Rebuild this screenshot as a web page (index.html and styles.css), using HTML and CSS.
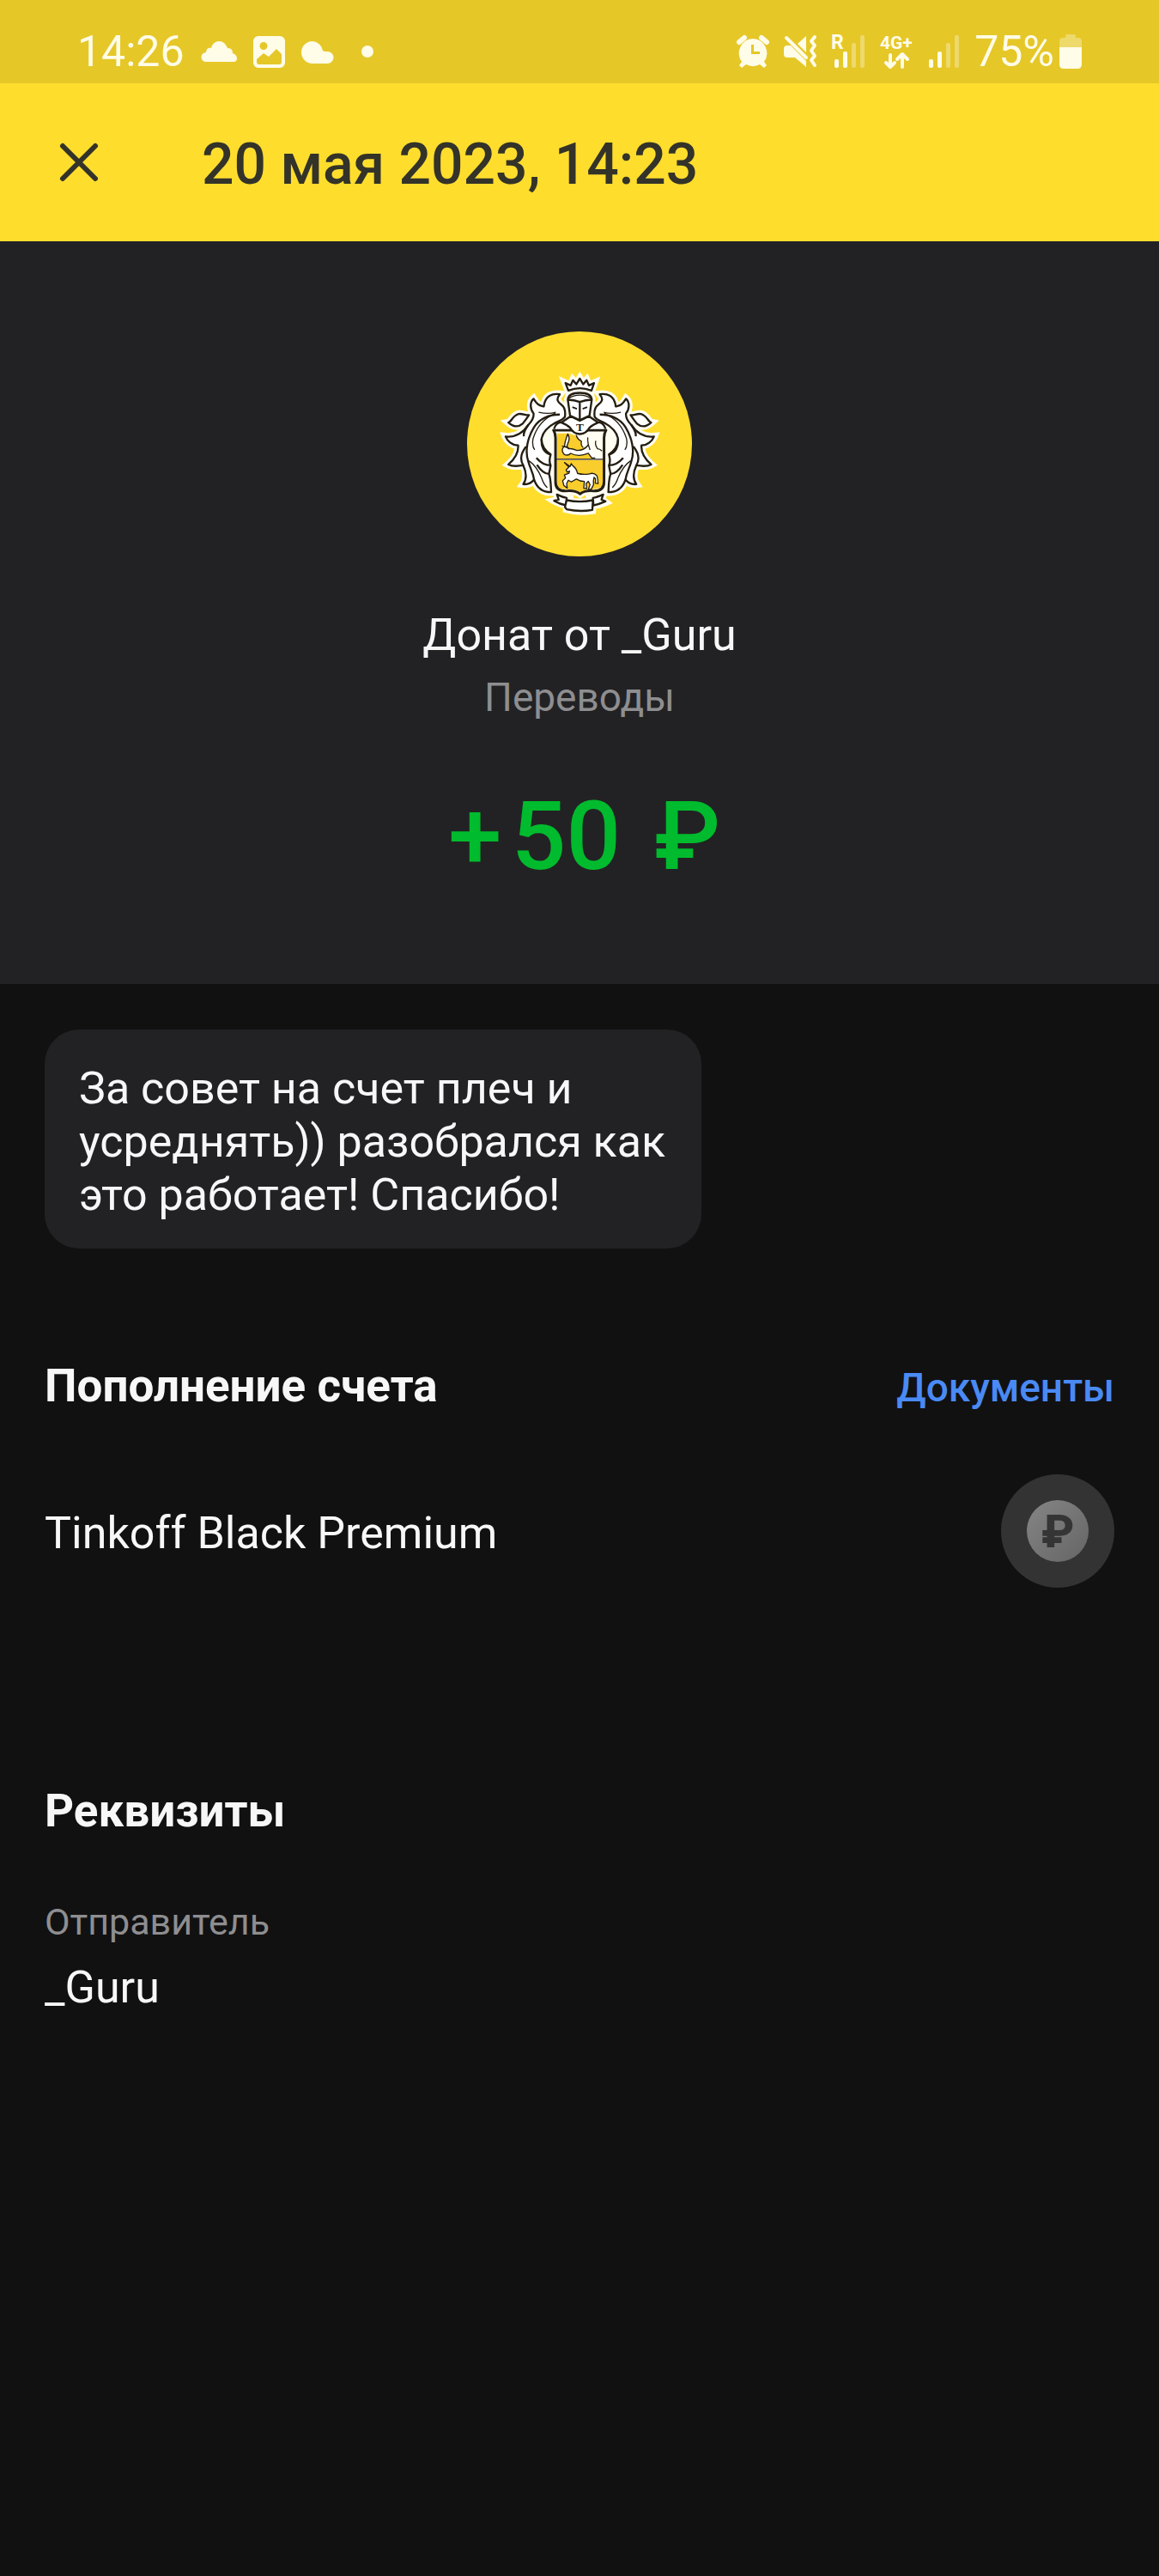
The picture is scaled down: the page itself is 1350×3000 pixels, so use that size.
FILE: index.html
```html
<!DOCTYPE html>
<html lang="ru">
<head>
    <meta charset="utf-8">
    <meta name="viewport" content="width=device-width, initial-scale=1">
    <title>20 мая 2023, 14:23</title>
    <link rel="stylesheet" href="styles.css">
</head>
<body>
    <div class="status-bar">
        <div class="status-group notifications">
            <span class="status-text">14:26</span>
            <svg class="status-icon" width="42" height="38" viewBox="0 0 42 38">
                <path d="M6 31a5.500 5.500 0 0 1 0-11c0-5 4-6 6-5 1-5 5-8 9-8 5 0 8 3 10 8 5 0 6 3 6 6 3 1 5 3 5 6 0 3-2 4-4 4z"/>
            </svg>
            <svg class="status-icon" width="37" height="38" viewBox="0 0 37 38">
                <path fill-rule="evenodd" d="M6 1h25a6 6 0 0 1 6 6v25a6 6 0 0 1-6 6H6a6 6 0 0 1-6-6V7a6 6 0 0 1 6-6zM12 8a4 4 0 1 0 0 9 4 4 0 0 0 0-9zM4 28v3q0 3 3 3h23q3 0 3-3V22l-6-6-9 9-6-4z"/>
            </svg>
            <svg class="status-icon" width="38" height="38" viewBox="0 0 38 38">
                <path d="M13 7a13 13 0 0 1 12 11c1 1 3 1 5 1a7 7 0 0 1 1 14H13A13 13 0 0 1 13 7z"/>
            </svg>
            <svg class="status-icon" width="52" height="38" viewBox="0 0 52 38">
                <circle cx="20" cy="19" r="7"/>
            </svg>
        </div>
        <div class="status-group">
            <svg class="status-icon" width="38" height="38" viewBox="0 0 38 38">
                <path fill-rule="evenodd" d="M19 4a17 17 0 0 1 13 27l3 4-3 3-5-4a17 17 0 0 1-16 0l-5 4-3-3 3-4A17 17 0 0 1 19 4zM17 11v11h10v-3h-7v-8z"/>
                <path class="stroke" d="M3 8l6-5M35 8l-6-5"/>
            </svg>
            <svg class="status-icon" width="38" height="38" viewBox="0 0 38 38">
                <path d="M16 10L26 1v19zM0 16q0-4 4-4h4l18 18v7L13 26H4q-4 0-4-4z"/>
                <path class="stroke thin" d="M3 3l23 23M36 2l-4 5 4 5-4 6 4 6-4 5 4 6"/>
            </svg>
            <svg class="status-icon" width="40" height="40" viewBox="0 0 40 40">
                <text class="net-label" x="0" y="17" font-size="23">R</text>
                <rect x="4" y="29" width="5" height="10" rx="2"/>
                <rect x="14" y="20" width="5" height="19" rx="2"/>
                <rect class="faint" x="24" y="10" width="5" height="29" rx="2"/>
                <rect class="faint" x="34" y="1" width="5" height="38" rx="2"/>
            </svg>
            <svg class="status-icon" width="40" height="40" viewBox="0 0 40 40">
                <text class="net-label" x="0" y="17" font-size="21">4G+</text>
                <path class="stroke thin" d="M12 24v14M7 33l5 5 5-5M26 38V24M20 29l6-6 6 6"/>
            </svg>
            <svg class="status-icon" width="36" height="40" viewBox="0 0 36 40">
                <rect x="0" y="29" width="5" height="10" rx="2"/>
                <rect x="10" y="20" width="5" height="19" rx="2"/>
                <rect class="faint" x="20" y="10" width="5" height="29" rx="2"/>
                <rect class="faint" x="30" y="1" width="5" height="38" rx="2"/>
            </svg>
            <div class="battery">
                <span class="status-text">75%</span>
                <svg class="status-icon" width="26" height="40" viewBox="0 0 26 40">
                    <path class="faint" d="M0 15V8q0-4 4-4h3V2q0-2 2-2h8q2 0 2 2v2h3q4 0 4 4v7z"/>
                    <path d="M0 15h26v20q0 5-5 5H5q-5 0-5-5z"/>
                </svg>
            </div>
        </div>
    </div>

    <header class="header">
        <button class="close-btn" type="button" aria-label="Закрыть">
            <svg width="46" height="46" viewBox="0 0 46 46">
                <path d="M4 4l38 38M42 4L4 42"/>
            </svg>
        </button>
        <h1 class="header-title">20 мая 2023, 14:23</h1>
    </header>

    <section class="hero">
        <svg class="avatar" viewBox="41 47 788 788">
            <defs>
                <g id="mantle">
                    <path d="M384 346C386 330 386 314 372 304C358 294 352 284 366 267C340 264 314 270 310 310C296 306 288 306 274 283C260 296 262 320 274 334C276 350 266 364 256 374C240 398 216 420 176 415C182 430 198 446 220 446C222 472 206 496 186 513C202 522 226 518 238 516C248 538 252 562 238 582C256 584 268 576 276 566C284 590 300 610 336 610C334 590 336 570 328 546L334 516C326 500 332 488 334 478C316 466 302 450 302 424C306 396 330 378 352 366C366 360 378 356 384 346Z"/>
                    <path d="M186 366C196 364 202 340 222 336C236 334 248 342 258 340C250 352 244 360 236 370C222 382 204 382 186 366Z"/>
                </g>
                <g id="center">
                    <path d="M396 254L386 228L404 236L412 218L424 232L436 212L448 232L460 218L468 236L486 228L477 254Q436 238 396 254Z"/>
                    <path d="M394 286Q396 262 436 260Q476 262 478 286L470 344L436 360L402 344Z"/>
                    <path d="M348 388Q356 362 380 360L404 344L436 360L468 344L492 360Q516 362 524 388V396H348Z"/>
                    <path d="M344 392H528Q520 404 521 422V576Q520 606 486 606Q456 602 437 616Q418 602 386 606Q352 606 351 576V422Q352 404 344 392Z"/>
                    <path d="M356 618Q376 630 400 632L398 640Q436 650 474 640L472 632Q500 630 518 618L512 636L526 646Q504 656 482 656L480 674Q436 682 390 670L390 656Q366 652 346 640L362 636Z"/>
                </g>
            </defs>
            <circle cx="435" cy="441" r="394" fill="#ffdd2d"/>
            <g class="halo">
                <use href="#mantle"/>
                <use href="#mantle" transform="translate(872 0) scale(-1 1)"/>
                <use href="#center"/>
                <path d="M310 390H560V600H310Z"/>
            </g>
            <g class="ink">
                <use href="#mantle"/>
                <use href="#mantle" transform="translate(872 0) scale(-1 1)"/>
                <g id="veins" fill="none">
                    <path d="M366 338C330 338 294 352 276 382C254 418 242 464 256 504C262 526 272 540 276 566"/>
                    <path d="M256 374C246 388 238 398 240 414M238 516C228 500 226 478 248 450M284 490C294 502 312 516 334 516M286 514C298 532 312 546 328 546M302 424C300 450 310 472 334 478"/>
                    <path class="fine" d="M292 330Q326 338 352 330M350 334C314 350 284 382 272 424Q268 448 278 462M258 500Q286 520 302 560Q310 584 322 594"/>
                </g>
                <use href="#veins" transform="translate(872 0) scale(-1 1)"/>
            </g>
            <!-- shield halves -->
            <path class="gold" d="M356 404H400Q410 410 424 410Q426 422 442 432Q438 444 446 452L474 462L482 494H356Z"/>
            <path class="gold" d="M355 498H518V580Q512 600 480 600Q456 598 437 610Q418 598 386 600Q358 600 355 576Z"/>
            <g class="ink thick">
                <path d="M344 393H528Q521 404 521 422V576Q520 606 486 606Q456 602 437 616Q418 602 386 606Q352 606 351 576V422Q351 404 344 393Z" fill="none"/>
                <path d="M352 495H520" fill="none" class="fine"/>
            </g>
            <g class="ink fine">
                <!-- arm with the sword -->
                <path fill="none" d="M424 410Q426 424 442 432Q438 446 448 454"/>
                <path d="M466 444Q452 464 426 464Q408 456 396 458L392 450Q380 448 376 456Q372 468 382 478Q396 484 404 474Q432 488 466 474L478 490H490"/>
                <path d="M382 450Q384 430 394 406Q402 422 396 434L390 452Z"/>
                <path fill="none" d="M464 418Q462 436 472 462M492 430Q488 442 498 458Q506 458 514 466M374 448L398 456"/>
                <!-- unicorn -->
                <path d="M382 506L402 520L406 510L412 518Q424 526 428 544Q446 550 470 546Q484 540 496 552Q500 566 500 580L490 578Q494 562 486 558Q482 572 484 584L476 600H466L472 584L466 572L458 580L460 598L450 596L452 572Q436 572 424 564L406 574L396 568L390 580L392 596L380 586L376 570L386 560L382 550L398 544L400 536L392 540L388 532L398 522Z"/>
            </g>
            <g class="ink">
                <path d="M346 388Q354 362 376 366Q386 368 402 384Q414 406 436 406Q458 406 470 384Q486 368 496 366Q518 362 526 388"/>
                <path d="M372 366L404 344L436 360L468 344L500 366Q480 374 470 384Q458 406 436 406Q414 406 402 384Q392 374 372 366Z"/>
                <path d="M394 286Q396 262 436 262Q476 262 478 286L470 342L436 358L402 342Z"/>
                <path d="M394 286Q416 286 436 294Q456 286 478 286M436 294V356" fill="none"/>
                <path d="M396 282Q414 270 436 270T476 282" fill="none" class="fine"/>
                <path d="M410 312L426 318M462 312L446 318" fill="none" class="eyes"/>
                <path d="M396 254L386 228L404 236L412 218L424 232L436 212L448 232L460 218L468 236L486 228L477 254Q436 238 396 254Z"/>
                <path d="M390 630Q376 628 356 618L362 636L346 640Q366 652 388 656ZM482 630Q496 628 518 618L512 636L526 642Q504 652 484 656Z"/>
                <path d="M390 638Q436 648 482 638L480 672Q436 680 390 670L384 662Z"/>
            </g>
            <text class="chest" x="436" y="396" text-anchor="middle">T</text>
        </svg>
        <h2 class="hero-name">Донат от _Guru</h2>
        <p class="hero-category">Переводы</p>
        <p class="amount">&#8202;+&#8202;50 &#8202;₽</p>
    </section>

    <main class="content">
        <div class="message">За совет на счет плеч и усреднять)) разобрался как это работает! Спасибо!</div>

        <section class="account">
            <div class="section-head">
                <h3 class="section-title">Пополнение счета</h3>
                <a class="docs-link" href="#">Документы</a>
            </div>
            <div class="account-row">
                <span class="value">Tinkoff Black Premium</span>
                <svg class="coin" viewBox="0 0 132 132">
                    <defs>
                        <linearGradient id="coinFill" x1="0" y1="0" x2="1" y2="1">
                            <stop offset="0" stop-color="#858585"/>
                            <stop offset="1" stop-color="#656565"/>
                        </linearGradient>
                    </defs>
                    <circle cx="66" cy="66" r="66" fill="#333333"/>
                    <circle cx="66" cy="66" r="36" fill="url(#coinFill)"/>
                    <text class="coin-sign" x="66" y="85" text-anchor="middle">₽</text>
                </svg>
            </div>
        </section>

        <section class="details">
            <h3 class="section-title">Реквизиты</h3>
            <dl class="detail">
                <dt class="label">Отправитель</dt>
                <dd class="value">_Guru</dd>
            </dl>
        </section>
    </main>
</body>
</html>
```
FILE: styles.css
```css
:root {
    --brand: #ffdd2d;
    --brand-dark: #e5c728;
    --bg: #111112;
    --panel: #222224;
    --text: #f7f7f8;
    --muted: #8e8e90;
    --green: #00bb2d;
    --link: #4a8af4;
}

* {
    box-sizing: border-box;
}

body {
    margin: 0;
    min-height: 100vh;
    background: var(--bg);
    color: var(--text);
    font-family: Roboto, "Liberation Sans", sans-serif;
    font-size: 52px;
    line-height: 62px;
}

h1, h2, h3, p, dl, dd {
    margin: 0;
}

/* Status bar */
.status-bar {
    display: flex;
    justify-content: space-between;
    align-items: center;
    height: 97px;
    padding: 23px 90px 0 90px;
    background: var(--brand-dark);
    color: #fffce8;
}

.status-group {
    display: flex;
    align-items: center;
    gap: 17px;
}

.notifications {
    gap: 19px;
}

.battery {
    display: flex;
    align-items: center;
    gap: 6px;
}

.status-text {
    font-size: 50px;
}

.status-icon {
    display: block;
    overflow: visible;
    fill: #fffce8;
}

.status-icon .stroke {
    fill: none;
    stroke: #fffce8;
    stroke-width: 6;
    stroke-linecap: round;
    stroke-linejoin: round;
}

.status-icon .thin {
    stroke-width: 4;
}

.status-icon .faint {
    opacity: 0.35;
}

.net-label {
    font-weight: 700;
}

/* Header */
.header {
    display: flex;
    align-items: center;
    height: 184px;
    padding: 0 69px;
    gap: 120px;
    background: var(--brand);
    color: #333329;
}

.close-btn {
    display: flex;
    padding: 0;
    border: none;
    background: none;
    cursor: pointer;
}

.close-btn svg {
    stroke: #333329;
    stroke-width: 6;
    stroke-linecap: round;
}

.header-title {
    padding-top: 6px;
    font-size: 66px;
    font-weight: 500;
    line-height: 78px;
}

/* Hero */
.hero {
    display: flex;
    flex-direction: column;
    align-items: center;
    padding: 105px 52px 106px;
    background: var(--panel);
}

.avatar {
    width: 262px;
    height: 262px;
}

.halo {
    fill: #fffdf2;
    stroke: #fffdf2;
    stroke-width: 26;
}

.ink {
    fill: #ffffff;
    stroke: #231d12;
    stroke-width: 7;
    stroke-linejoin: round;
}

.ink.thick {
    stroke-width: 9;
}

.ink.fine,
.ink .fine {
    stroke-width: 4;
}

.ink .eyes {
    stroke-width: 5;
}

.gold {
    fill: #f9cd2b;
}

.chest {
    fill: #231d12;
    font-family: "Liberation Serif", serif;
    font-size: 40px;
    font-weight: 700;
}

.hero-name {
    margin-top: 61px;
    font-size: 52px;
    font-weight: 400;
}

.hero-category {
    margin-top: 13px;
    color: var(--muted);
    font-size: 46px;
    line-height: 56px;
}

.amount {
    margin-top: 68px;
    color: var(--green);
    font-size: 112px;
    font-weight: 500;
    line-height: 132px;
    white-space: pre;
}

/* Content */
.content {
    padding: 53px 52px;
}

.message {
    max-width: 765px;
    padding: 38px 36px 31px 40px;
    border-radius: 40px;
    background: var(--panel);
}

.account {
    margin-top: 129px;
}

.section-head,
.account-row {
    display: flex;
    justify-content: space-between;
    align-items: baseline;
}

.section-title {
    font-size: 53px;
    font-weight: 700;
}

.docs-link {
    color: var(--link);
    font-size: 46px;
    font-weight: 500;
    text-decoration: none;
}

.account-row {
    align-items: center;
    margin-top: 70px;
}

.account-row .value {
    padding-top: 6px;
}

.coin {
    width: 132px;
    height: 132px;
}

.coin-sign {
    fill: #353535;
    font-size: 54px;
    font-weight: 800;
}

.details {
    margin-top: 229px;
}

.detail {
    margin-top: 70px;
}

.label {
    color: var(--muted);
    font-size: 43px;
    line-height: 56px;
}

.detail .value {
    margin-top: 18px;
}
```
